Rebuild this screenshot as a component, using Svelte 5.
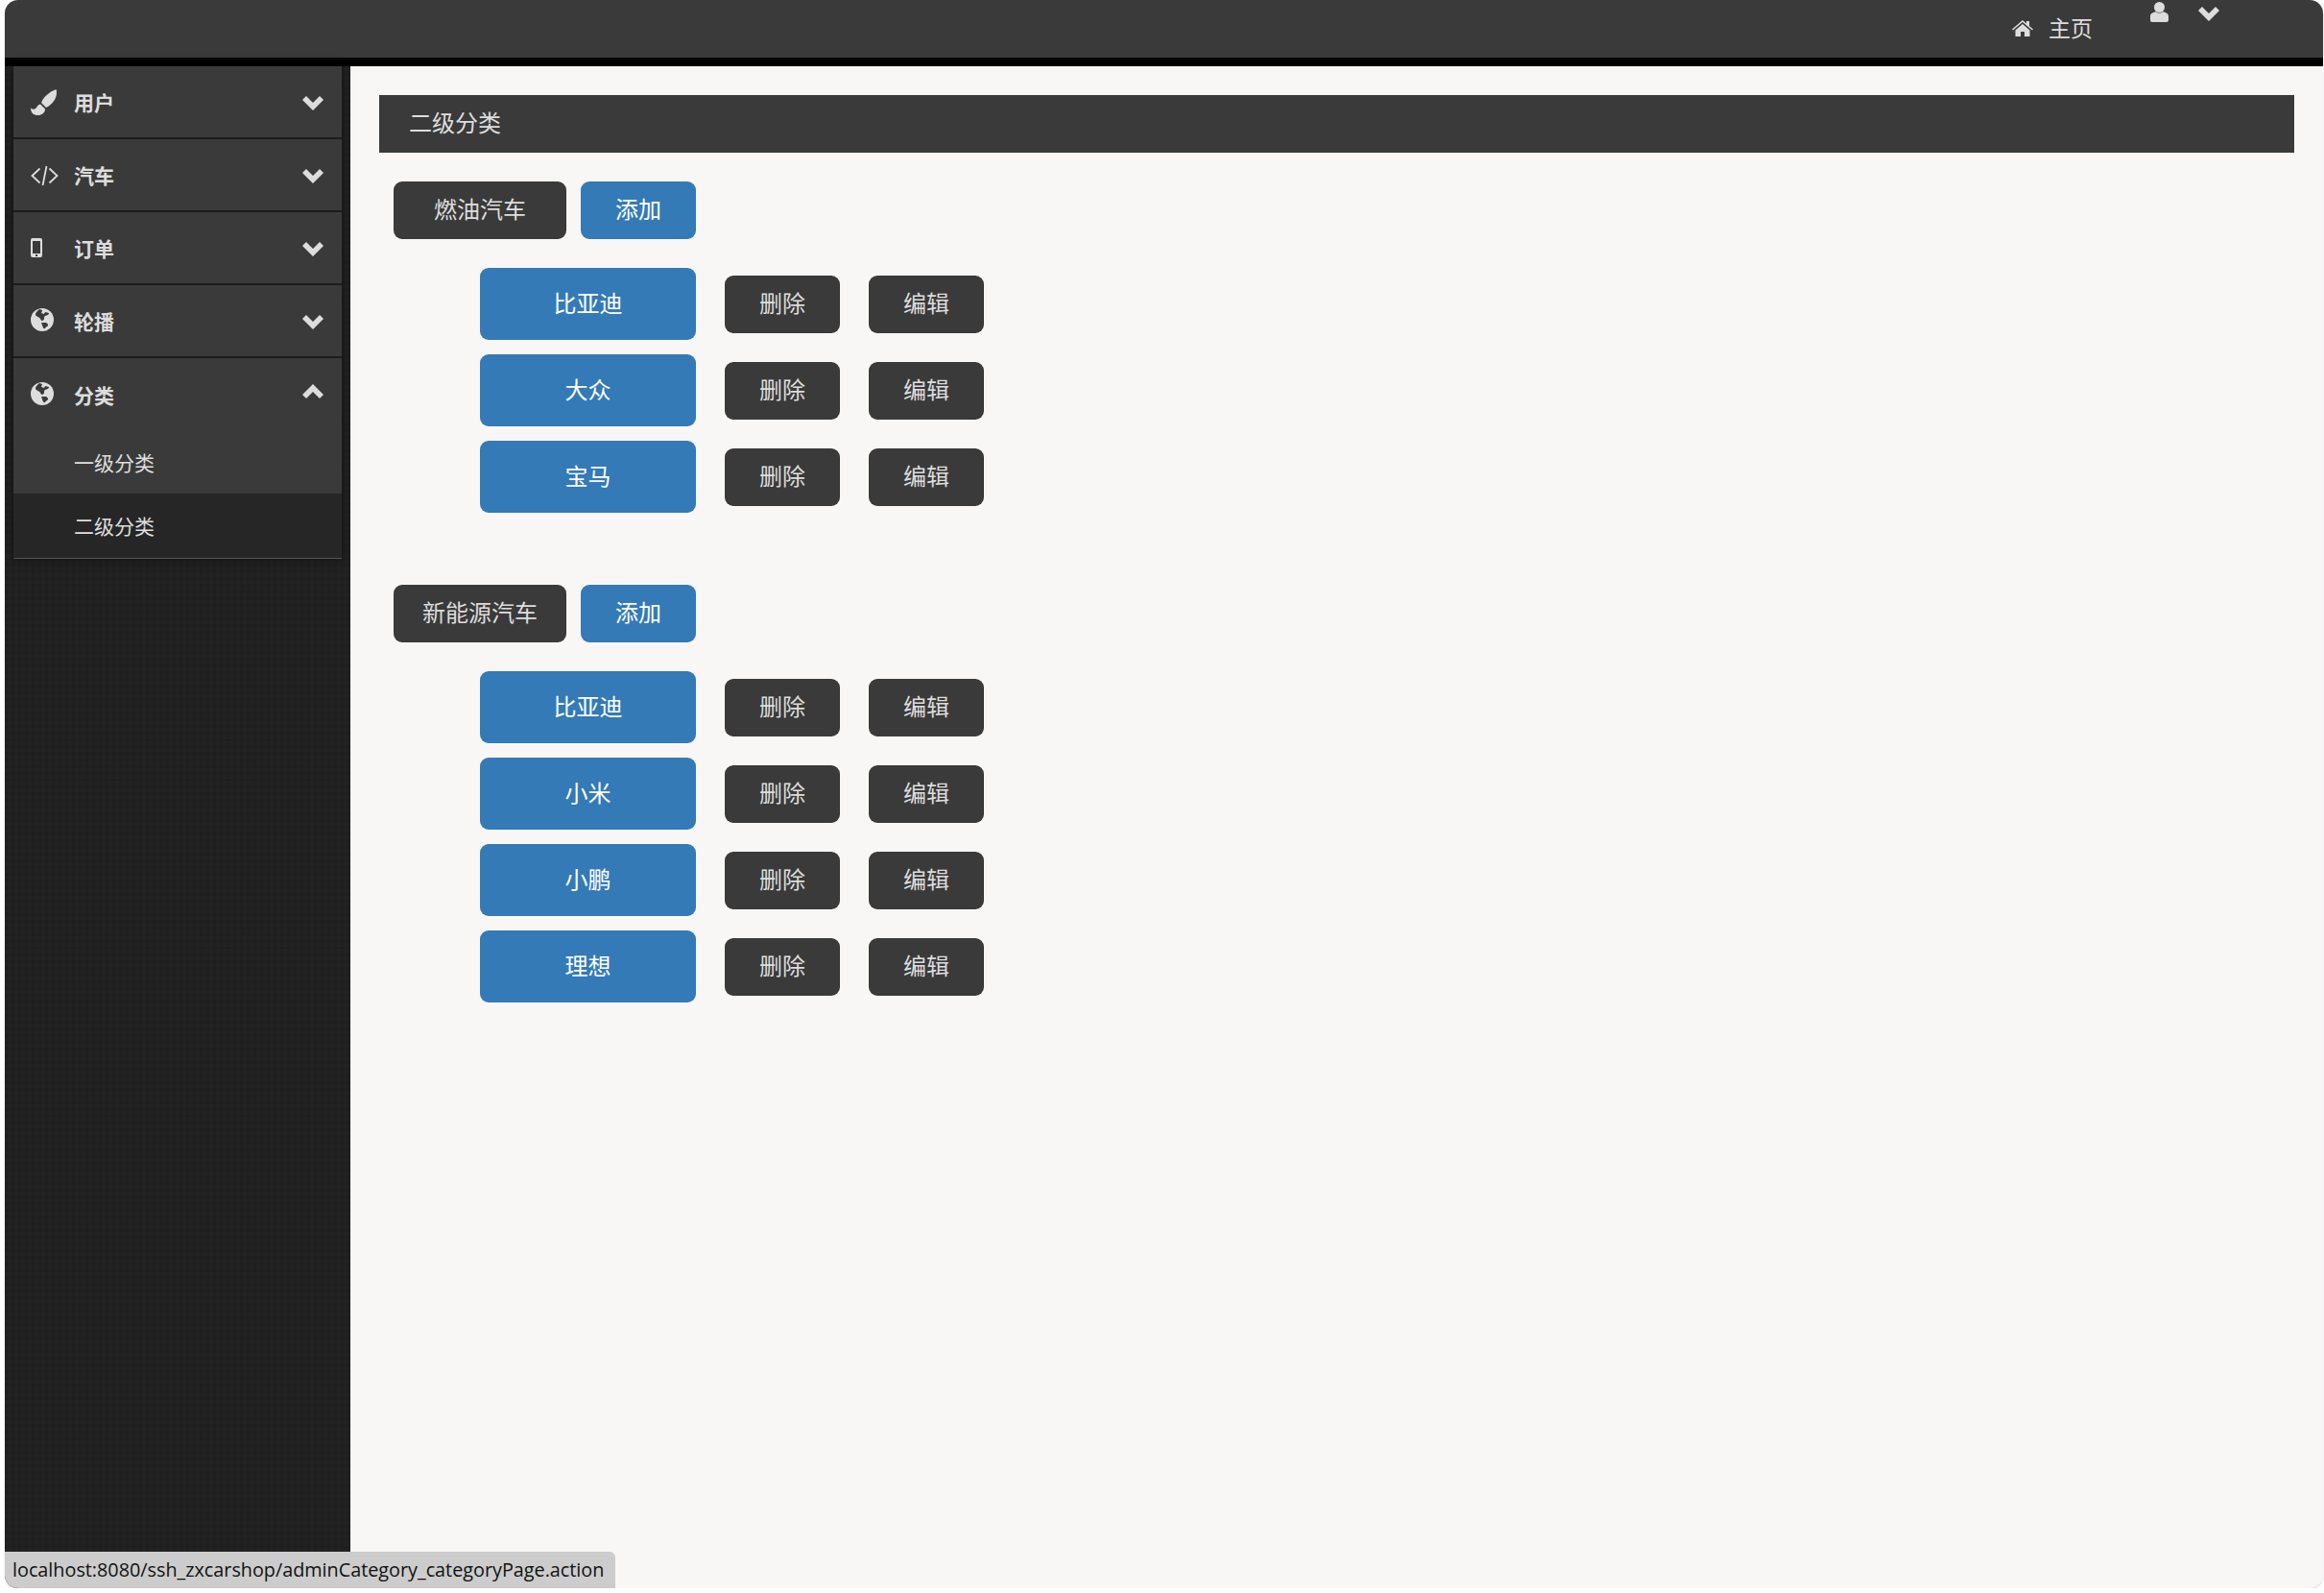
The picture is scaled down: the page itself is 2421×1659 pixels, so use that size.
<script>
	const menu = [
		{ name: '用户', icon: 'brush' },
		{ name: '汽车', icon: 'code' },
		{ name: '订单', icon: 'phone' },
		{ name: '轮播', icon: 'globe' },
		{ name: '分类', icon: 'globe', open: true, children: ['一级分类', '二级分类'] }
	];
	const groups = [
		{ name: '燃油汽车', brands: ['比亚迪', '大众', '宝马'] },
		{ name: '新能源汽车', brands: ['比亚迪', '小米', '小鹏', '理想'] }
	];
</script>

{#snippet chevron(up)}
	<svg class="chevron" class:up viewBox="0 0 22 15">
		<path d="M0 4 L4 0 L11 7 L18 0 L22 4 L11 15 Z" />
	</svg>
{/snippet}

{#snippet icon(kind)}
	{#if kind === 'brush'}
		<svg class="icon" viewBox="0 0 27 27">
			<path d="M26.500 0 C28.500 7 24 15 16 19 L11 14 C13 8 19 3 26.500 0 Z" />
			<path d="M10 15.500 L15 20.500 C15 24.500 11.500 27 7.500 27 C3 27 0 24.500 0 19.500 C2 21.500 4.500 21 6 19 C7 17 8 16 10 15.500 Z" />
		</svg>
	{:else if kind === 'code'}
		<svg class="icon code" viewBox="0 0 29 27">
			<path class="line" d="M9.500 6.500 L1.500 14 L9.500 21.500 M19.500 6.500 L27.500 14 L19.500 21.500 M16.500 4 L12.500 24" />
		</svg>
	{:else if kind === 'phone'}
		<svg class="icon" viewBox="0 0 27 27">
			<path fill-rule="evenodd" d="M2 3 H10 Q12 3 12 5 V21 Q12 23 10 23 H2 Q0 23 0 21 V5 Q0 3 2 3 Z M2 6 V19 H10 V6 Z M5 20 V22 H7 V20 Z" />
		</svg>
	{:else}
		<svg class="icon globe" viewBox="0 0 24 24">
			<circle cx="12" cy="12" r="12" />
			<path class="land" d="M9 1 C7 3 4.500 5 5 7 C6 9 9 9 10 11 C11 13 12 14 13.500 12 C15 10 13 9 15 8 C17 7 19 7 19 5 L15 4 L14 6 L11 5 L12 2 Z" />
			<path class="land" d="M11 15 L16 15 C18 16 19 18 17 19 C15 20 15 22 13.500 21 C12 19 12 17 11 15 Z" />
		</svg>
	{/if}
{/snippet}

<div class="shell">
	<header class="topbar">
		<a class="home">
			<svg class="home-icon" viewBox="0 0 22 17">
				<path d="M11 0 L15 3.500 V1 H18 V6 L22 9.500 L21 10.500 L11 2 L1 10.500 L0 9.500 Z" />
				<path d="M11 4 L18.500 10.500 V17 H13 V12 H9 V17 H3.500 V10.500 Z" />
			</svg>
			<span>主页</span>
		</a>
		<svg class="user-icon" viewBox="0 0 19 21">
			<circle cx="9.500" cy="5.500" r="5.500" />
			<path d="M6 10 C7 12 12 12 13 10 C16 11 19 12 19 15 V19 Q19 21 17 21 H2 Q0 21 0 19 V15 C0 12 3 11 6 10 Z" />
		</svg>
		<div class="user-arrow">{@render chevron(false)}</div>
	</header>

	<div class="body">
		<aside class="sidebar">
			<nav class="panel">
				{#each menu as item}
					<div class="item">
						<div class="item-head">
							<span class="icon-slot">{@render icon(item.icon)}</span>
							<b>{item.name}</b>
							<span class="arrow" class:open={item.open}>{@render chevron(item.open)}</span>
						</div>
						{#if item.children}
							{#each item.children as child, i}
								<div class="sub" class:active={i === 1}>{child}</div>
							{/each}
						{/if}
					</div>
				{/each}
			</nav>
		</aside>

		<main class="content">
			<div class="title">二级分类</div>
			{#each groups as group}
				<section class="group">
					<div class="group-head">
						<button class="btn dark wide">{group.name}</button>
						<button class="btn blue small">添加</button>
					</div>
					<div class="rows">
						{#each group.brands as brand}
							<div class="row">
								<button class="btn blue brand">{brand}</button>
								<button class="btn dark small">删除</button>
								<button class="btn dark small">编辑</button>
							</div>
						{/each}
					</div>
				</section>
			{/each}
		</main>
	</div>

	<div class="status">localhost:8080/ssh_zxcarshop/adminCategory_categoryPage.action</div>
</div>

<style>
	:global(body) {
		background: #fff;
		font-family: "Noto Sans CJK SC", "Liberation Sans", sans-serif;
	}

	.shell {
		position: relative;
		display: flex;
		flex-direction: column;
		box-sizing: border-box;
		height: 1654px;
		margin-left: 5px;
		margin-right: 1px;
		background: #f8f7f5;
		border-radius: 14px;
		box-shadow: 0 1px 2px #d8d8d8;
		overflow: hidden;
	}

	.topbar {
		display: flex;
		align-items: flex-start;
		flex: none;
		height: 60px;
		background: #3a3a3a;
		border-bottom: 9px solid #000;
		color: #ddd;
		padding-right: 108px;
		justify-content: flex-end;
	}

	.home {
		display: flex;
		align-items: center;
		height: 56px;
		font-size: 23px;
		margin-right: 60px;
	}

	.home-icon {
		width: 22px;
		height: 17px;
		margin-top: 2px;
		margin-right: 16px;
		fill: #ddd;
	}

	.user-icon {
		width: 19px;
		height: 21px;
		margin-top: 2px;
		margin-right: 31px;
		fill: #ddd;
	}

	.user-arrow {
		margin-top: 7px;
		line-height: 0;
	}

	.chevron {
		width: 22px;
		height: 15px;
		fill: #ddd;
	}

	.body {
		display: flex;
		flex: 1;
		min-height: 0;
	}

	.sidebar {
		flex: none;
		width: 360px;
		box-sizing: border-box;
		padding: 0 9px;
		background-color: #222;
		background-image:
			repeating-linear-gradient(0deg, rgba(0, 0, 0, 0.06) 0 3px, transparent 3px 7px),
			repeating-linear-gradient(90deg, rgba(0, 0, 0, 0.06) 0 3px, transparent 3px 7px);
	}

	.panel {
		background: #3a3a3a;
		box-shadow: 0 0 9px rgba(0, 0, 0, 0.5);
		border-bottom: 1px solid #555;
		color: #ddd;
	}

	.item {
		border-bottom: 2px solid #1c1c1c;
	}

	.item:last-child {
		border-bottom: 0;
	}

	.item-head {
		display: flex;
		align-items: center;
		height: 74px;
		padding: 0 19px 0 18px;
		font-size: 21px;
	}

	.item:last-child .item-head {
		height: 76px;
	}

	.icon-slot {
		display: flex;
		flex: none;
		width: 45px;
		line-height: 0;
	}

	.icon {
		width: 27px;
		height: 27px;
		fill: #ddd;
	}

	.icon.code {
		width: 29px;
		margin-right: -2px;
	}

	.icon.globe {
		width: 24px;
		height: 24px;
		margin-top: -2px;
	}

	.line {
		fill: none;
		stroke: #ddd;
		stroke-width: 1.8;
	}

	.land {
		fill: #3a3a3a;
	}

	.arrow {
		margin-left: auto;
		line-height: 0;
		position: relative;
		top: 1px;
	}

	.arrow.open {
		top: -4px;
	}

	.chevron.up {
		transform: scaleY(-1);
	}

	.sub {
		display: flex;
		align-items: center;
		box-sizing: border-box;
		height: 65px;
		padding: 0 0 2px 63px;
		font-size: 21px;
	}

	.sub.active {
		background: #262626;
		height: 67px;
	}

	.content {
		flex: 1;
		min-width: 0;
		padding: 30px;
	}

	.title {
		height: 60px;
		line-height: 56px;
		padding-left: 31px;
		background: #3a3a3a;
		color: #ddd;
		font-size: 24px;
	}

	.group {
		padding-left: 15px;
		margin-top: 30px;
		margin-bottom: 75px;
	}

	.group-head {
		display: flex;
		gap: 15px;
		margin-bottom: 30px;
	}

	.rows {
		display: flex;
		flex-direction: column;
		gap: 15px;
		padding-left: 90px;
	}

	.row {
		display: flex;
		align-items: center;
		gap: 30px;
	}

	.btn {
		height: 60px;
		padding: 0 0 4px;
		border: 0;
		border-radius: 9px;
		font: 400 24px "Noto Sans CJK SC", "Liberation Sans", sans-serif;
	}

	.group-head .btn {
		padding-bottom: 5px;
	}

	.dark {
		background: #3a3a3a;
		color: #ddd;
	}

	.blue {
		background: #337ab7;
		color: #fff;
	}

	.wide {
		width: 180px;
	}

	.small {
		width: 120px;
	}

	.brand {
		width: 225px;
		height: 75px;
	}

	.status {
		position: absolute;
		left: 0;
		bottom: 0;
		height: 38px;
		box-sizing: border-box;
		padding: 0 12px 0 8px;
		background: #ccc;
		border-top-right-radius: 6px;
		color: #111;
		font: 19.800px/37px "Open Sans", "Liberation Sans", sans-serif;
		white-space: nowrap;
	}
</style>
